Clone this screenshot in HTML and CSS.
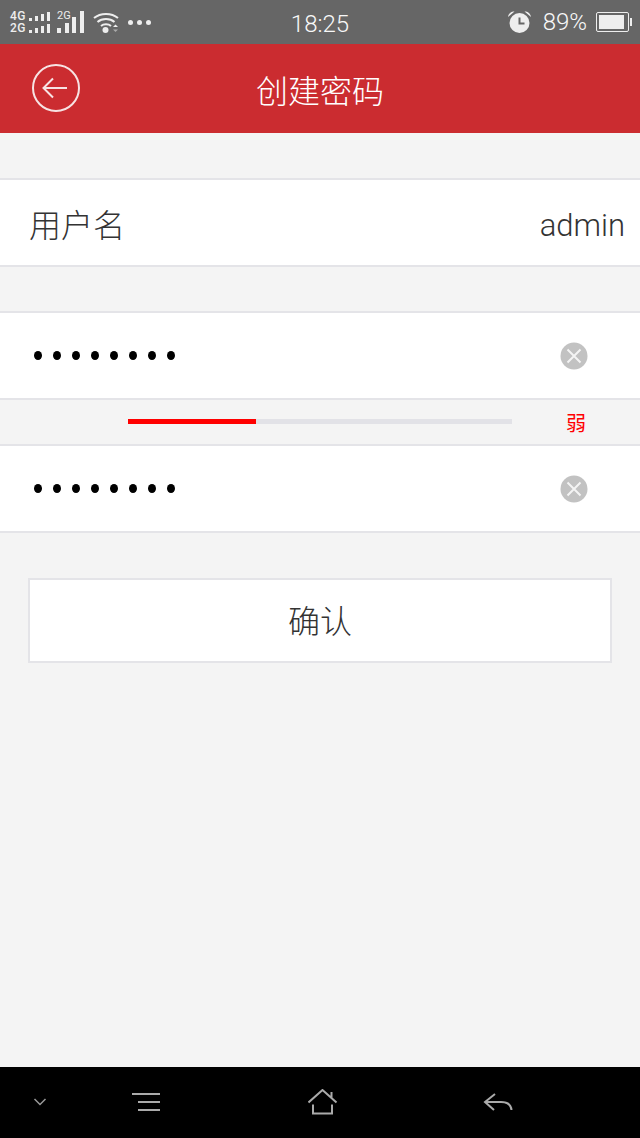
FILE: index.html
```html
<!DOCTYPE html>
<html lang="zh">
<head>
    <meta charset="UTF-8">
    <meta name="viewport" content="width=device-width, initial-scale=1.0">
    <title>创建密码</title>
    <link rel="stylesheet" href="styles.css">
</head>
<body>
    <div class="page">
        <!-- 状态栏 -->
        <div class="status-bar">
            <div class="status-left">
                <div class="net-double">
                    <div class="net-line"><span>4G</span><i class="sig s1"></i><i class="sig s2"></i><i class="sig s3"></i><i class="sig s4"></i></div>
                    <div class="net-line"><span>2G</span><i class="sig s1"></i><i class="sig s2"></i><i class="sig s3"></i><i class="sig s4"></i></div>
                </div>
                <div class="net-single">
                    <span class="net-label">2G</span>
                    <i class="bar b1"></i><i class="bar b2"></i><i class="bar b3"></i><i class="bar b4"></i>
                </div>
                <svg class="wifi" width="26" height="21" viewBox="0 0 26 21" fill="none" stroke="#eee" stroke-width="2">
                    <path d="M1 6C7.500 0.500 18.500 0.500 25 6"/>
                    <path d="M4.500 10C9 6 17 6 21.500 10"/>
                    <path d="M8 14C10.500 11.800 15.500 11.800 18 14"/>
                    <circle cx="12.500" cy="18" r="3" fill="#eee" stroke="none"/>
                    <path d="M20 15l2.500-2.500 2.500 2.500z" fill="#eee" stroke="none"/>
                    <path d="M20 17.500l2.500 2.500 2.500-2.500z" fill="#aaa" stroke="none"/>
                </svg>
                <div class="more"><i></i><i></i><i></i></div>
            </div>
            <div class="status-time">18:25</div>
            <div class="status-right">
                <svg class="alarm" width="25" height="24" viewBox="0 0 25 24">
                    <circle cx="12.500" cy="13" r="10" fill="#eee"/>
                    <path d="M1 7C1.500 3.500 4 1.500 7.500 1.500zM24 7C23.500 3.500 21 1.500 17.500 1.500z" fill="#eee"/>
                    <path d="M12.500 7.500v6h5" fill="none" stroke="#666" stroke-width="2"/>
                </svg>
                <span class="battery-text">89%</span>
                <div class="battery"><div class="battery-level"></div></div>
            </div>
        </div>

        <!-- 标题栏 -->
        <div class="header">
            <svg class="back" width="50" height="50" viewBox="0 0 50 50" fill="none" stroke="#f7e3e3" stroke-width="2">
                <circle cx="25" cy="25" r="23"/>
                <path d="M13 25H36M22 15.500L12.500 25L22 34.500"/>
            </svg>
            <h1>创建密码</h1>
        </div>

        <div class="row row-first">
            <span class="row-label">用户名</span>
            <span class="row-value">admin</span>
        </div>

        <div class="row row-second">
            <div class="dots"><i></i><i></i><i></i><i></i><i></i><i></i><i></i><i></i></div>
            <svg class="clear" width="28" height="28" viewBox="0 0 28 28">
                <circle cx="14" cy="14" r="13.500" fill="#c2c2c2"/>
                <path d="M7.500 7.500L20.500 20.500M20.500 7.500L7.500 20.500" stroke="#f4f4f4" stroke-width="2"/>
            </svg>
        </div>

        <div class="strength">
            <div class="strength-track"><div class="strength-fill"></div></div>
            <span class="strength-text">弱</span>
        </div>

        <div class="row">
            <div class="dots"><i></i><i></i><i></i><i></i><i></i><i></i><i></i><i></i></div>
            <svg class="clear" width="28" height="28" viewBox="0 0 28 28">
                <circle cx="14" cy="14" r="13.500" fill="#c2c2c2"/>
                <path d="M7.500 7.500L20.500 20.500M20.500 7.500L7.500 20.500" stroke="#f4f4f4" stroke-width="2"/>
            </svg>
        </div>

        <div class="confirm">确认</div>

        <!-- 底部导航 -->
        <div class="nav-bar">
            <svg class="nav-down" width="14" height="8" viewBox="0 0 14 8" fill="none" stroke="#999" stroke-width="1.500">
                <path d="M1.500 1L7 6.500L12.500 1"/>
            </svg>
            <svg class="nav-menu" width="30" height="22" viewBox="0 0 30 22" fill="none" stroke="#aaa" stroke-width="2">
                <path d="M1 2H29M7 10H29M7 18H29"/>
            </svg>
            <svg class="nav-home" width="30" height="27" viewBox="0 0 30 27" fill="none" stroke="#aaa" stroke-width="2">
                <path d="M0.500 13.500L14.500 1L28.500 13.500M23.500 3V9M5 15.500V24.500H24V15.500"/>
            </svg>
            <svg class="nav-back" width="30" height="22" viewBox="0 0 30 22" fill="none" stroke="#aaa" stroke-width="2">
                <path d="M12 2L2 10L11 18M2 10H18C24 10 28 12 28.500 18"/>
            </svg>
        </div>
    </div>
</body>
</html>
```

FILE: styles.css
```css
* {
    box-sizing: border-box;
}
body {
    margin: 0;
    font-family: Roboto, "Noto Sans CJK SC", sans-serif;
    background-color: #f4f4f4;
}
.page {
    display: flex;
    flex-direction: column;
    height: 1138px;
    overflow: hidden;
}

/* 状态栏 */
.status-bar {
    position: relative;
    display: flex;
    align-items: center;
    justify-content: space-between;
    height: 44px;
    padding: 0 9px 0 10px;
    background-color: #666;
    color: #eee;
}
.status-left, .status-right {
    display: flex;
    align-items: center;
}
.net-double {
    display: flex;
    flex-direction: column;
    gap: 2px;
}
.net-line {
    display: flex;
    align-items: flex-end;
    height: 10px;
    font-size: 12px;
    line-height: 10px;
    letter-spacing: 0.500px;
    font-weight: 500;
}
.net-line span {
    width: 19px;
}
.sig {
    width: 3px;
    margin-right: 3px;
    background-color: #eee;
}
.s1 {
    height: 3px;
}
.s2 {
    height: 5px;
}
.s3 {
    height: 7px;
}
.s4 {
    height: 9px;
    margin-right: 0;
}
.net-single {
    position: relative;
    display: flex;
    align-items: flex-end;
    gap: 3.600px;
    width: 27px;
    height: 22px;
    margin-left: 7px;
}
.net-label {
    position: absolute;
    top: 0;
    left: 0;
    font-size: 11px;
    line-height: 10px;
}
.bar {
    width: 4px;
    background-color: #eee;
}
.b1 {
    height: 5px;
}
.b2 {
    height: 10px;
}
.b3 {
    height: 16px;
}
.b4 {
    height: 22px;
}
.wifi {
    margin-left: 9px;
}
.more {
    display: flex;
    gap: 4px;
    margin-left: 9px;
}
.more i {
    width: 5px;
    height: 5px;
    border-radius: 50%;
    background-color: #eee;
}
.status-time {
    position: absolute;
    top: 0;
    left: 0;
    width: 100%;
    font-size: 24px;
    font-weight: 300;
    line-height: 48px;
    text-align: center;
    color: #f8f8f8;
}
.battery-text {
    margin-left: 11px;
    font-size: 24px;
    font-weight: 300;
    line-height: 44px;
    color: #f8f8f8;
}
.battery {
    position: relative;
    width: 33px;
    height: 20px;
    margin-left: 9px;
    margin-right: 2px;
    padding: 2px;
    border: 1px solid #eee;
    border-radius: 2px;
}
.battery::after {
    content: "";
    position: absolute;
    top: 5px;
    right: -4px;
    width: 2px;
    height: 8px;
    background-color: #eee;
}
.battery-level {
    width: 92%;
    height: 100%;
    background-color: #eee;
}

/* 标题栏 */
.header {
    position: relative;
    display: flex;
    align-items: center;
    justify-content: center;
    height: 89px;
    background-color: #cb2c30;
}
.header h1 {
    margin: 0;
    font-size: 32px;
    font-weight: 300;
    color: #fff;
}
.back {
    position: absolute;
    top: 19px;
    left: 31px;
}

/* 输入行 */
.row {
    display: flex;
    align-items: center;
    justify-content: space-between;
    height: 89px;
    background: white;
    border-top: 2px solid #e4e4e8;
    border-bottom: 2px solid #e4e4e8;
}
.row-first {
    margin-top: 45px;
    padding: 0 15px 0 29px;
}
.row-second {
    margin-top: 44px;
}
.row-label {
    font-size: 32px;
    font-weight: 300;
    color: #333;
}
.row-value {
    margin-top: 5px;
    font-size: 31px;
    font-weight: 300;
    color: #333;
}
.dots {
    display: flex;
    gap: 11px;
    margin-left: 34px;
}
.dots i {
    width: 8px;
    height: 9px;
    border-radius: 50%;
    background-color: #000;
}
.clear {
    margin-right: 52px;
}

/* 密码强度 */
.strength {
    display: flex;
    align-items: center;
    height: 44px;
    padding-left: 128px;
    padding-bottom: 1px;
}
.strength-track {
    width: 384px;
    height: 5px;
    background-color: #e2e2e7;
}
.strength-fill {
    width: 128px;
    height: 100%;
    background-color: #f00;
}
.strength-text {
    margin-top: 2px;
    margin-left: 54px;
    font-size: 20px;
    color: #f00;
}

/* 确认按钮 */
.confirm {
    height: 85px;
    margin: 45px 28px 0;
    background: white;
    border: 2px solid #e4e4e8;
    font-size: 32px;
    font-weight: 300;
    line-height: 85px;
    text-align: center;
    color: #333;
}

/* 底部导航 */
.nav-bar {
    position: relative;
    height: 71px;
    margin-top: auto;
    background-color: #000;
}
.nav-bar svg {
    position: absolute;
}
.nav-down {
    top: 31px;
    left: 33px;
}
.nav-menu {
    top: 25px;
    left: 131px;
}
.nav-home {
    top: 22px;
    left: 308px;
}
.nav-back {
    top: 25px;
    left: 483px;
}
```
